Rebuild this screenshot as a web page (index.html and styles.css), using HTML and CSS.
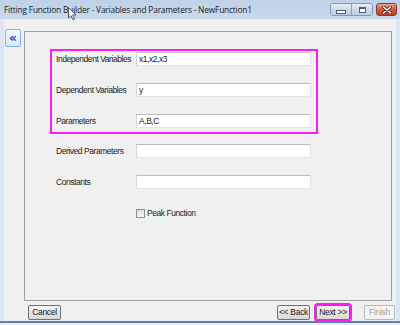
FILE: index.html
```html
<!DOCTYPE html>
<html lang="en">
<head>
  <meta charset="UTF-8">
  <title>Fitting Function Builder</title>
  <link rel="stylesheet" href="styles.css">
</head>
<body>
  <div class="window">
    <div class="titlebar">
      <span class="title">Fitting Function Builder - Variables and Parameters - NewFunction1</span>
      <div class="caption-btns">
        <span class="cap-group">
          <span class="cap min"><i></i></span>
          <span class="cap max"><i></i></span>
        </span>
        <span class="cap close">
          <svg width="10" height="8" viewBox="0 0 10 8">
            <path d="M1.5 1 L8.5 7 M8.5 1 L1.5 7" stroke="#5a1a10" stroke-width="3" stroke-linecap="round"/>
            <path d="M1.5 1 L8.5 7 M8.5 1 L1.5 7" stroke="#ffffff" stroke-width="1.6" stroke-linecap="round"/>
          </svg>
        </span>
      </div>
      <!-- mouse pointer over the caption -->
      <svg class="pointer" width="10" height="14" viewBox="0 0 10 14">
        <path d="M0.5 0.5 L0.5 11 L3 8.6 L5 12.8 L6.6 12 L4.7 8 L8 8 Z" fill="#fff" stroke="#555" stroke-width="1"/>
      </svg>
    </div>

    <div class="client">
      <button class="collapse">&laquo;</button>

      <div class="panel">
        <div class="fields highlight">
          <label>Independent Variables</label>
          <div class="field">x1,x2,x3</div>
          <label>Dependent Variables</label>
          <div class="field">y</div>
          <label>Parameters</label>
          <div class="field">A,B,C</div>
        </div>

        <div class="fields extra">
          <label>Derived Parameters</label>
          <div class="field"></div>
          <label>Constants</label>
          <div class="field"></div>
          <span></span>
          <label class="check"><span class="box"></span>Peak Function</label>
        </div>
      </div>

      <div class="footer">
        <button class="btn cancel">Cancel</button>
        <button class="btn back">&lt;&lt; Back</button>
        <button class="btn next">Next &gt;&gt;</button>
        <button class="btn finish" disabled>Finish</button>
      </div>
    </div>

    <div class="frame-bottom"></div>
  </div>
</body>
</html>
```

FILE: styles.css
```css
body {
  margin: 0;
  padding: 0;
  font-family: "Liberation Sans", Arial, sans-serif;
  color: #222;
}

.window {
  width: 400px;
  height: 325px;
  display: flex;
  flex-direction: column;
  background-color: #dce6f3;
  overflow: hidden;
}

/* caption */
.titlebar {
  position: relative;
  height: 19px;
  flex: none;
  display: flex;
  align-items: flex-start;
  padding-left: 4px;
  background: linear-gradient(#bfd2ea, #cad9ec);
}

.title {
  font-family: "Open Sans", "Noto Sans", sans-serif;
  font-size: 8.4px;
  line-height: 19px;
  color: #1b1b1b;
  white-space: nowrap;
  letter-spacing: -0.2px;
}

.caption-btns {
  margin-left: auto;
  margin-right: 3px;
  margin-top: 3px;
  display: flex;
  gap: 3px;
}

.cap-group {
  display: flex;
  border: 1px solid #8198b6;
  border-radius: 3px;
  overflow: hidden;
}

.cap {
  height: 11px;
  display: flex;
  align-items: center;
  justify-content: center;
  background: linear-gradient(#e9eff7, #c9d7ea 55%, #bccde4);
}

.cap.min {
  width: 20px;
  border-right: 1px solid #8ea3bf;
}

.cap.max {
  width: 20px;
}

.cap.min i {
  display: block;
  width: 8px;
  height: 2px;
  margin-top: 4px;
  background-color: #fff;
  border: 1px solid #4f5f78;
}

.cap.max i {
  display: block;
  width: 5px;
  height: 3px;
  background-color: #fff;
  border: 1px solid #4f5f78;
  border-top-width: 2px;
}

.cap.close {
  width: 21px;
  height: 13px;
  border: 1px solid #8a3a2c;
  border-radius: 3px;
  box-sizing: border-box;
  background: linear-gradient(#e3a491, #cc5a42 50%, #c0402a);
}

.pointer {
  position: absolute;
  left: 68px;
  top: 7px;
}

/* client area */
.client {
  flex: none;
  height: 302px;
  margin: 0 4px;
  padding: 10px 4px 0 1px;
  box-sizing: border-box;
  background-color: #f0f0f0;
  display: grid;
  grid-template-columns: 16px 1fr;
  grid-template-rows: auto 1fr;
  column-gap: 3px;
}

.collapse {
  width: 16px;
  height: 18px;
  padding: 0;
  border: 1px solid #7db2ea;
  border-radius: 2px;
  background: linear-gradient(#f2f7fd, #dce9f8);
  color: #2536c8;
  font-family: "DejaVu Sans", sans-serif;
  font-weight: bold;
  font-size: 12px;
  line-height: 14px;
}

.panel {
  margin-top: 2px;
  height: 270px;
  box-sizing: border-box;
  border: 1px solid #a0a0a0;
}

.fields {
  display: grid;
  grid-template-columns: 80px 175px;
  grid-auto-rows: 14px;
  row-gap: 17px;
  font-size: 8.5px;
  letter-spacing: -0.45px;
}

.fields label {
  line-height: 14px;
  white-space: nowrap;
}

.highlight {
  margin: 17px 0 0 25px;
  width: 268px;
  height: 85px;
  box-sizing: border-box;
  padding: 1px 4px 0 4px;
  border: 2px solid #ff1cf0;
}

.extra {
  margin: 10px 0 0 31px;
}

.field {
  box-sizing: border-box;
  height: 14px;
  padding-left: 2px;
  line-height: 12px;
  background-color: #fff;
  border: 1px solid #e4e4e4;
  border-top-color: #bcbcbc;
  border-left-color: #d6d6d6;
  white-space: nowrap;
}

.check {
  display: flex;
  align-items: center;
}

.box {
  width: 9px;
  height: 9px;
  box-sizing: border-box;
  margin-right: 2px;
  border: 1px solid #8e8f8f;
  background: linear-gradient(#dedede, #f8f8f8);
}

/* wizard buttons */
.footer {
  grid-column: 1 / -1;
  display: flex;
  align-items: flex-start;
  padding-top: 4px;
  margin-right: -3px;
}

.btn {
  height: 15px;
  padding: 0;
  border: 1px solid #707070;
  border-radius: 2px;
  background: linear-gradient(#f4f4f4, #e6e6e6 50%, #d8d8d8);
  font-family: "Liberation Sans", Arial, sans-serif;
  font-size: 8.5px;
  letter-spacing: -0.3px;
  color: #1a1a1a;
  line-height: 13px;
}

.cancel {
  width: 33px;
  margin-left: 23px;
}

.back {
  width: 33px;
  margin-left: auto;
}

.next {
  width: 34px;
  margin-left: 6px;
  outline: 2px solid #ff1cf0;
  outline-offset: 0;
}

.finish {
  width: 31px;
  margin-left: 14px;
  border-color: #b5b9bd;
  background: #f4f4f4;
  color: #a3a3a3;
}

.frame-bottom {
  flex: none;
  height: 2px;
  border-top: 2px solid #5d80a8;
  background-color: #e8eef6;
}
```
